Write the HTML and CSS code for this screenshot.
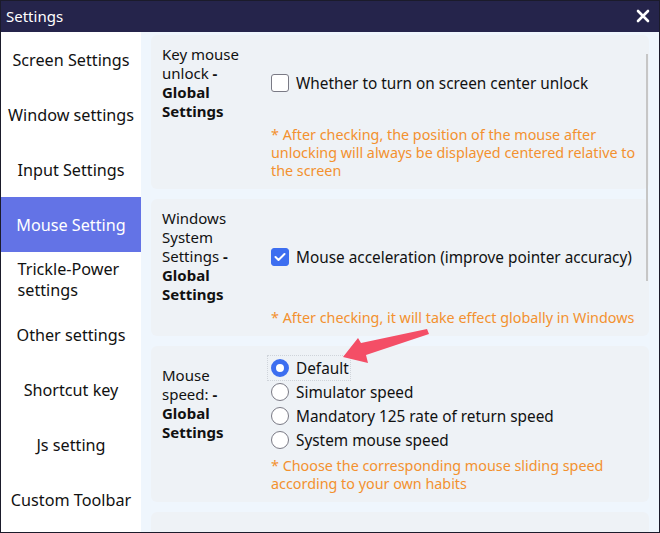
FILE: index.html
```html
<!DOCTYPE html>
<html lang="en">

<head>
    <meta charset="UTF-8">
    <meta name="viewport" content="width=device-width, initial-scale=1.0">
    <title>Settings</title>
    <link rel="stylesheet" href="styles.css">
</head>

<body>
    <div class="window">
        <div class="titlebar">
            <span class="title">Settings</span>
            <svg class="close" width="14" height="14" viewBox="0 0 14 14">
                <path d="M2 2 L12 12 M12 2 L2 12" stroke="#fff" stroke-width="2.6" stroke-linecap="round" />
            </svg>
        </div>

        <div class="main">
            <nav class="sidebar">
                <div class="nav-item"><span>Screen Settings</span></div>
                <div class="nav-item"><span>Window settings</span></div>
                <div class="nav-item"><span>Input Settings</span></div>
                <div class="nav-item active"><span>Mouse Setting</span></div>
                <div class="nav-item wrap"><span>Trickle-Power settings</span></div>
                <div class="nav-item"><span>Other settings</span></div>
                <div class="nav-item"><span>Shortcut key</span></div>
                <div class="nav-item"><span>Js setting</span></div>
                <div class="nav-item"><span>Custom Toolbar</span></div>
            </nav>

            <div class="content">
                <section class="card">
                    <div class="row">
                        <div class="label">Key mouse <span>unlock</span> <b>-</b> <b>Global Settings</b></div>
                        <div class="controls">
                            <label class="option"><span class="box"></span>Whether to turn on screen center unlock</label>
                        </div>
                    </div>
                    <p class="note">* After checking, the position of the mouse after unlocking will always be displayed centered relative to the screen</p>
                </section>

                <section class="card">
                    <div class="row">
                        <div class="label">Windows System <span>Settings</span> <b>-</b> <b>Global Settings</b></div>
                        <div class="controls">
                            <label class="option"><span class="box checked">
                                <svg width="12" height="10" viewBox="0 0 12 10"><path d="M1.5 5 L4.5 8 L10.5 2" fill="none" stroke="#fff" stroke-width="2" stroke-linecap="round" stroke-linejoin="round" /></svg>
                            </span>Mouse acceleration (improve pointer accuracy)</label>
                        </div>
                    </div>
                    <p class="note">* After checking, it will take effect globally in Windows</p>
                </section>

                <section class="card">
                    <div class="row">
                        <div class="label">Mouse <span>speed:</span> <b>-</b> <b>Global Settings</b></div>
                        <div class="controls">
                            <label class="option focused"><span class="radio selected"></span>Default</label>
                            <label class="option"><span class="radio"></span>Simulator speed</label>
                            <label class="option"><span class="radio"></span>Mandatory 125 rate of return speed</label>
                            <label class="option"><span class="radio"></span>System mouse speed</label>
                        </div>
                    </div>
                    <p class="note">* Choose the corresponding mouse sliding speed according to your own habits</p>
                </section>

                <section class="card last"></section>
            </div>
        </div>

        <!-- scrollbar thumb and the annotation arrow sit over the content -->
        <div class="scroll-thumb"></div>
        <svg class="arrow" width="660" height="533" viewBox="0 0 660 533">
            <polygon points="343,357 358,338 361,343 427,329 429,334 366,355 368,363" fill="#f44e66" />
        </svg>
    </div>
</body>

</html>
```

FILE: styles.css
```css
* {
    box-sizing: border-box;
}

body {
    margin: 0;
    font-family: 'Noto Sans', 'Open Sans', sans-serif;
    color: #111;
}

.window {
    position: relative;
    width: 660px;
    height: 533px;
    border: 1px solid #1b1b2b;
    display: flex;
    flex-direction: column;
    overflow: hidden;
}

.titlebar {
    height: 31px;
    flex-shrink: 0;
    background: #25244b;
    color: #fff;
    display: flex;
    align-items: center;
    justify-content: space-between;
    padding: 0 9px 1px 5px;
}

.title {
    font-size: 15px;
}

.close {
    display: block;
}

.main {
    flex: 1;
    display: flex;
    min-height: 0;
}

.sidebar {
    width: 140px;
    flex-shrink: 0;
    background: #fff;
    display: flex;
    flex-direction: column;
}

.nav-item {
    height: 55px;
    flex-shrink: 0;
    display: flex;
    align-items: center;
    justify-content: center;
    font-size: 16.2px;
    line-height: 21px;
    color: #111;
    padding: 1px 3px 0;
}

.nav-item span {
    text-align: left;
}

.nav-item.wrap span {
    width: 107px;
}

.nav-item.active {
    background: #6373e6;
    color: #fff;
}

.content {
    flex: 1;
    background: #eff6fd;
    padding: 3px 10px 0 10px;
    display: flex;
    flex-direction: column;
    gap: 10px;
    overflow: hidden;
}

.card {
    background: #eef2f6;
    border-radius: 6px;
    padding: 10px 11px 9px 11px;
    flex-shrink: 0;
}

.card.last {
    height: 40px;
}

.row {
    display: flex;
    align-items: center;
}

.label {
    width: 92px;
    margin-right: 17px;
    flex-shrink: 0;
    font-size: 15px;
    line-height: 19px;
}

.controls {
    display: flex;
    flex-direction: column;
}

.option {
    display: flex;
    align-items: center;
    gap: 7px;
    font-size: 15.35px;
    line-height: 24px;
}

.box {
    width: 18px;
    height: 18px;
    flex-shrink: 0;
    border: 1px solid #7a7a85;
    border-radius: 3px;
    background: #fff;
    display: flex;
    align-items: center;
    justify-content: center;
}

.box.checked {
    background: #3c6ef0;
    border-color: #3c6ef0;
}

.radio {
    width: 18px;
    height: 18px;
    flex-shrink: 0;
    border: 1px solid #7a7a85;
    border-radius: 50%;
    background: #fff;
}

.radio.selected {
    border: 5px solid #3c6ef0;
}

.focused {
    align-self: flex-start;
    outline: 1px dotted #cfd4da;
    margin-left: -3px;
    padding: 0 1px 0 3px;
}

.note {
    margin: 5px 0 0 109px;
    font-size: 14.35px;
    line-height: 18px;
    color: #f3912f;
}

.scroll-thumb {
    position: absolute;
    left: 645px;
    top: 53px;
    width: 2px;
    height: 227px;
    background: #c6c6c6;
}

.arrow {
    position: absolute;
    left: -1px;
    top: -1px;
    pointer-events: none;
}
```
